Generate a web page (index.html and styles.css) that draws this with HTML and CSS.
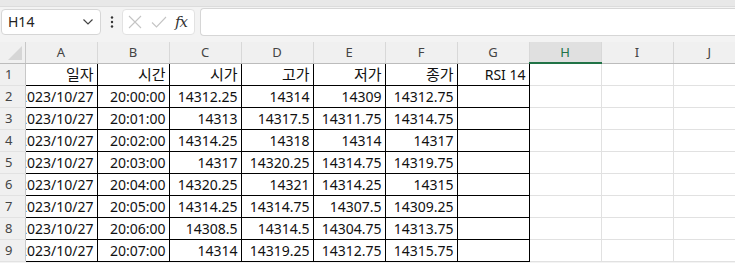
FILE: index.html
```html
<!DOCTYPE html>
<html>
<head>
    <title>Sheet1</title>
    <link rel="stylesheet" href="styles.css">
</head>
<body>
    <div class="topstrip"></div>
    <div class="formula-row">
        <div class="namebox">
            <span>H14</span>
            <svg class="chevron" width="12" height="8" viewBox="0 0 12 8"><path d="M1.5 1.5 L6 6 L10.5 1.5" fill="none" stroke="#444" stroke-width="1.2"/></svg>
        </div>
        <div class="dots">
            <svg width="4" height="12" viewBox="0 0 4 12"><circle cx="2" cy="1.5" r="1.2" fill="#333"/><circle cx="2" cy="6" r="1.2" fill="#333"/><circle cx="2" cy="10.5" r="1.2" fill="#333"/></svg>
        </div>
        <div class="fxbox">
            <svg width="14" height="14" viewBox="0 0 14 14"><path d="M1 1 L13 13 M13 1 L1 13" stroke="#c4c4c4" stroke-width="1.1"/></svg>
            <svg width="16" height="14" viewBox="0 0 16 14"><path d="M1 7.5 L5.5 12 L15 2" fill="none" stroke="#c4c4c4" stroke-width="1.1"/></svg>
            <span class="fx">fx</span>
        </div>
        <div class="formula-input"></div>
    </div>

    <table class="sheet">
        <colgroup>
            <col class="rowhead-col">
            <col><col><col><col><col><col><col><col><col><col>
        </colgroup>
        <thead>
            <tr>
                <th class="corner"><div class="tri"></div></th>
                <th>A</th><th>B</th><th>C</th><th>D</th><th>E</th><th>F</th><th>G</th>
                <th class="sel">H</th><th>I</th><th>J</th>
            </tr>
        </thead>
        <tbody id="rows"></tbody>
    </table>

    <script>
        const data = [
            ['일자', '시간', '시가', '고가', '저가', '종가', 'RSI 14'],
            ['2023/10/27', '20:00:00', '14312.25', '14314', '14309', '14312.75', ''],
            ['2023/10/27', '20:01:00', '14313', '14317.5', '14311.75', '14314.75', ''],
            ['2023/10/27', '20:02:00', '14314.25', '14318', '14314', '14317', ''],
            ['2023/10/27', '20:03:00', '14317', '14320.25', '14314.75', '14319.75', ''],
            ['2023/10/27', '20:04:00', '14320.25', '14321', '14314.25', '14315', ''],
            ['2023/10/27', '20:05:00', '14314.25', '14314.75', '14307.5', '14309.25', ''],
            ['2023/10/27', '20:06:00', '14308.5', '14314.5', '14304.75', '14313.75', ''],
            ['2023/10/27', '20:07:00', '14314', '14319.25', '14312.75', '14315.75', '']
        ];

        const body = document.getElementById('rows');
        data.forEach((row, i) => {
            const tr = document.createElement('tr');
            let html = '<th>' + (i + 1) + '</th>';
            row.forEach(val => {
                const ko = /[가-힣]/.test(val) ? ' ko' : '';
                html += '<td class="data"><div class="cell' + ko + '">' + val + '</div></td>';
            });
            html += '<td></td><td></td><td></td>';
            tr.innerHTML = html;
            body.appendChild(tr);
        });
    </script>
</body>
</html>
```

FILE: styles.css
```css
body {
    margin: 0;
    background-color: #f3f3f3;
    font-family: "Noto Sans", "Noto Sans CJK KR", sans-serif;
    overflow: hidden;
}
.topstrip {
    height: 6px;
    background-color: #e8e8e8;
    border-bottom: 1px solid #dcdcdc;
}
.formula-row {
    display: flex;
    align-items: center;
    height: 27px;
    margin-top: 1px;
    padding-left: 1px;
}
.namebox {
    display: flex;
    align-items: center;
    justify-content: space-between;
    width: 100px;
    height: 26px;
    box-sizing: border-box;
    background-color: #fff;
    border: 1px solid #d6d6d6;
    border-radius: 4px;
    padding: 0 6px 0 6px;
    font-size: 14px;
    color: #222;
}
.chevron {
    margin-top: 1px;
}
.dots {
    width: 21px;
    display: flex;
    justify-content: center;
    padding-top: 1px;
}
.fxbox {
    display: flex;
    align-items: center;
    width: 73px;
    height: 26px;
    box-sizing: border-box;
    background-color: #fff;
    border: 1px solid #e2e2e2;
    border-radius: 4px;
    padding-left: 5px;
    gap: 9px;
}
.fx {
    font-family: "DejaVu Serif", "Liberation Serif", serif;
    font-style: italic;
    font-size: 15px;
    color: #333;
    margin-left: -1px;
    letter-spacing: -1px;
}
.formula-input {
    flex: 1;
    height: 26px;
    margin-left: 5px;
    background-color: #fff;
    border: 1px solid #d6d6d6;
    border-right: none;
    border-radius: 4px 0 0 4px;
}
.sheet {
    margin-top: 7px;
    border-collapse: collapse;
    table-layout: fixed;
    width: 745px;
    background-color: #fff;
}
.sheet col {
    width: 72px;
}
.sheet col.rowhead-col {
    width: 25px;
}
.sheet thead th {
    height: 20px;
    padding: 0;
    background-color: #f0f0f0;
    border-left: 1px solid #d8d8d8;
    border-bottom: 1px solid #bcbcbc;
    font-weight: normal;
    font-size: 13px;
    color: #444;
}
.sheet thead th.sel {
    background-color: #e0e0e0;
    color: #217346;
    border-bottom: 2px solid #217346;
}
.sheet thead th.corner {
    position: relative;
    border-left: none;
    border-right: 1px solid #c8c8c8;
}
.tri {
    position: absolute;
    right: 3px;
    bottom: 3px;
    width: 0;
    height: 0;
    border-left: 14px solid transparent;
    border-bottom: 14px solid #d6d6d6;
}
.sheet tbody th {
    height: 21px;
    padding: 0 0 0 5px;
    text-align: left;
    background-color: #f0f0f0;
    border-right: 1px solid #c8c8c8;
    border-bottom: 1px solid #e2e2e2;
    font-weight: normal;
    font-size: 13px;
    color: #444;
}
.sheet td {
    padding: 0;
    border: 1px solid #e1e1e1;
}
.sheet td.data {
    border: 1px solid #000;
}
.cell {
    height: 21px;
    line-height: 21px;
    overflow: hidden;
    white-space: nowrap;
    display: flex;
    justify-content: flex-end;
    padding-right: 3px;
    font-size: 14px;
    color: #111;
}
.cell.ko {
    font-size: 15px;
}
```
